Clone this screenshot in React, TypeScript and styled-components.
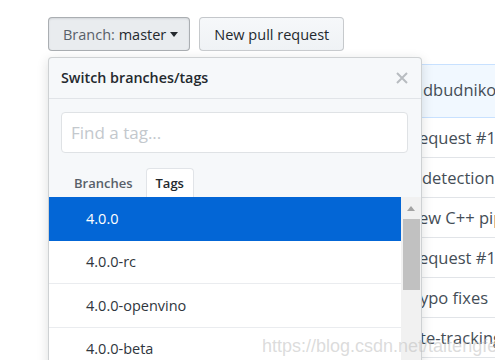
import React from "react";
import styled, { createGlobalStyle } from "styled-components";

const GlobalStyle = createGlobalStyle`
  html, body { margin: 0; padding: 0; background: #fff; overflow: hidden; }
  body { font-family: "Open Sans", "Noto Sans", sans-serif; color: #24292e; }
  * { box-sizing: border-box; }
`;

const Page = styled.div`
  position: relative;
  width: 495px;
  height: 360px;
  overflow: hidden;
  padding: 17px 0 0 48px;
`;

const Toolbar = styled.div`
  display: flex;
  gap: 9px;
  height: 34px;
`;

const Button = styled.button<{ $selected?: boolean }>`
  display: flex;
  align-items: center;
  height: 34px;
  padding: 0 ${(p) => (p.$selected ? "11px" : "14px")} 0 14px;
  font-family: "Open Sans", sans-serif;
  font-size: 14.5px;
  font-weight: 400;
  color: #24292e;
  white-space: pre;
  border: 1px solid ${(p) => (p.$selected ? "rgba(27,31,35,0.3)" : "rgba(27,31,35,0.2)")};
  border-radius: 4px;
  background: ${(p) =>
    p.$selected ? "#e9ecef" : "linear-gradient(-180deg, #f6f8fa 0%, #eff2f5 100%)"};
  box-shadow: ${(p) => (p.$selected ? "inset 0 1px 2px rgba(27,31,35,0.1)" : "none")};
`;

const Muted = styled.span`
  color: #586069;
`;

const Caret = styled.span`
  display: inline-block;
  margin-left: 4px;
  width: 0;
  height: 0;
  border-left: 4.5px solid transparent;
  border-right: 4.5px solid transparent;
  border-top: 5px solid #24292e;
`;

const Commits = styled.div`
  margin-top: 13px;
  width: 700px;
`;

const CommitRow = styled.div<{ $highlight?: boolean }>`
  display: flex;
  align-items: center;
  height: ${(p) => (p.$highlight ? "54px" : "40px")};
  padding-bottom: ${(p) => (p.$highlight ? "3px" : "0")};
  background: ${(p) => (p.$highlight ? "#f1f8ff" : "#fff")};
  border: ${(p) => (p.$highlight ? "1px solid #c8e1ff" : "none")};
  border-bottom: 1px solid ${(p) => (p.$highlight ? "#c8e1ff" : "#e1e4e8")};
  font-size: 16.5px;
  color: #444d56;
  white-space: nowrap;
`;

const Hidden = styled.span<{ $w: number }>`
  display: block;
  flex: none;
  width: ${(p) => p.$w}px;
  overflow: hidden;
  text-align: right;
`;

const Panel = styled.div`
  position: absolute;
  left: 48px;
  top: 57px;
  width: 374px;
  height: 330px;
  background: #f6f8fa;
  border: 1px solid rgba(27, 31, 35, 0.18);
  border-radius: 4px;
  box-shadow: 0 3px 12px rgba(27, 31, 35, 0.15);
  display: flex;
  flex-direction: column;
  overflow: hidden;
`;

const PanelHeader = styled.div`
  flex: none;
  display: flex;
  align-items: center;
  justify-content: space-between;
  height: 41px;
  padding: 0 13px 1px 12px;
  border-bottom: 1px solid #e1e4e8;
  font-size: 14.3px;
  font-weight: 600;
  color: #24292e;
`;

const CloseIcon = styled.svg`
  width: 12px;
  height: 12px;
  flex: none;
`;

const Filter = styled.div`
  flex: none;
  padding: 13px 13px 0 12px;
`;

const Input = styled.input`
  display: block;
  width: 100%;
  height: 41px;
  padding: 0 9px;
  border: 1px solid #dfe2e5;
  border-radius: 4px;
  background: #fff;
  font-family: "Open Sans", sans-serif;
  font-size: 17px;
  color: #24292e;
  outline: none;
  &::placeholder {
    color: #c3c8cd;
  }
`;

const Tabs = styled.div`
  flex: none;
  display: flex;
  gap: 0;
  margin-top: 15px;
  padding-left: 12px;
  height: 29px;
`;

const Tab = styled.div<{ $active?: boolean }>`
  display: flex;
  align-items: center;
  height: 29px;
  padding: 0 ${(p) => (p.$active ? "9px" : "12px")};
  font-size: 13px;
  font-weight: 600;
  color: ${(p) => (p.$active ? "#24292e" : "#586069")};
  background: ${(p) => (p.$active ? "#fff" : "transparent")};
  border: 1px solid ${(p) => (p.$active ? "#e1e4e8" : "transparent")};
  border-bottom: none;
  border-radius: 4px 4px 0 0;
`;

const ListWrap = styled.div`
  flex: 1;
  min-height: 0;
  display: flex;
  background: #fff;
  overflow: hidden;
`;

const Items = styled.div`
  flex: 1;
  display: flex;
  flex-direction: column;
`;

const Item = styled.div<{ $selected?: boolean }>`
  flex: none;
  display: flex;
  align-items: center;
  height: 43.5px;
  padding-left: 37px;
  font-size: 14.5px;
  color: ${(p) => (p.$selected ? "#fff" : "#2f363d")};
  background: ${(p) => (p.$selected ? "#0366d6" : "#fff")};
  border-bottom: 1px solid ${(p) => (p.$selected ? "#0366d6" : "#eaecef")};
`;

const ScrollTrack = styled.div`
  flex: none;
  width: 20px;
  background: #f1f1f1;
  display: flex;
  flex-direction: column;
  align-items: flex-start;
  padding-left: 2px;
`;

const ScrollArrow = styled.div`
  flex: none;
  margin: 9px 0 0 4px;
  width: 0;
  height: 0;
  border-left: 4.5px solid transparent;
  border-right: 4.5px solid transparent;
  border-bottom: 5px solid #a3a3a3;
`;

const ScrollThumb = styled.div`
  flex: none;
  margin-top: 8px;
  width: 17px;
  height: 71px;
  background: #c1c1c1;
`;

const Watermark = styled.div`
  position: absolute;
  left: 262px;
  top: 336px;
  font-family: "Liberation Sans", Arial, sans-serif;
  font-size: 18px;
  color: rgba(190, 190, 190, 0.55);
  white-space: nowrap;
  pointer-events: none;
`;

const commits: { hidden: string; text: string; w: number; highlight?: boolean }[] = [
  { hidden: "Merge pull request #1 from ", text: "dbudniko/gapi_ie_backend", w: 374, highlight: true },
  { hidden: "Merge pull r", text: "equest #1", w: 371 },
  { hidden: "Fix face ", text: "detection", w: 374 },
  { hidden: "Add n", text: "ew C++ pipeline", w: 371 },
  { hidden: "Merge pull r", text: "equest #1", w: 371 },
  { hidden: "Some t", text: "ypo fixes", w: 372 },
  { hidden: "Use sta", text: "te-tracking", w: 372 },
];

const tags = ["4.0.0", "4.0.0-rc", "4.0.0-openvino", "4.0.0-beta", "4.0.0-alpha"];

export default function App() {
  return (
    <>
      <GlobalStyle />
      <Page>
        <Toolbar>
          <Button $selected>
            <Muted>Branch: </Muted>master
            <Caret />
          </Button>
          <Button>New pull request</Button>
        </Toolbar>
        <Commits>
          {commits.map((c, i) => (
            <CommitRow key={i} $highlight={c.highlight}>
              <Hidden $w={c.w}>{c.hidden}</Hidden>
              <span>{c.text}</span>
            </CommitRow>
          ))}
        </Commits>

        <Panel>
          <PanelHeader>
            <span>Switch branches/tags</span>
            <CloseIcon viewBox="0 0 12 12">
              <path d="M1 1 L11 11 M11 1 L1 11" stroke="#b8bcc0" strokeWidth="2" strokeLinecap="butt" />
            </CloseIcon>
          </PanelHeader>
          <Filter>
            <Input placeholder="Find a tag..." />
          </Filter>
          <Tabs>
            <Tab>Branches</Tab>
            <Tab $active>Tags</Tab>
          </Tabs>
          <ListWrap>
            <Items>
              {tags.map((t, i) => (
                <Item key={t} $selected={i === 0}>
                  {t}
                </Item>
              ))}
            </Items>
            <ScrollTrack>
              <ScrollArrow />
              <ScrollThumb />
            </ScrollTrack>
          </ListWrap>
        </Panel>
        <Watermark>https://blog.csdn.net/taitengfei</Watermark>
      </Page>
    </>
  );
}
